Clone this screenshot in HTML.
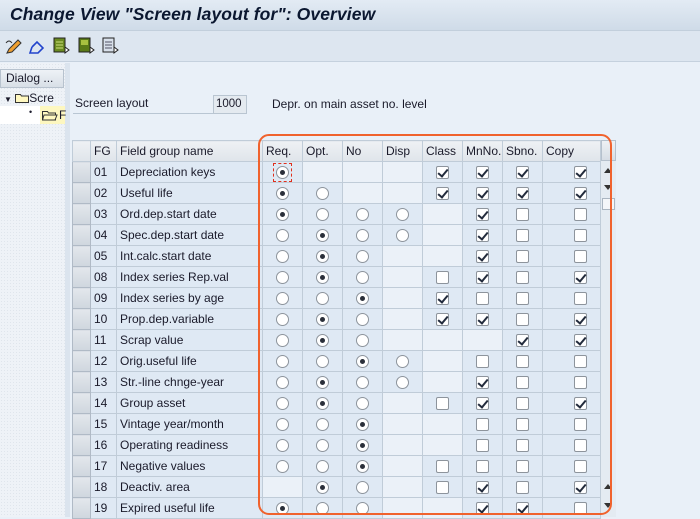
<!DOCTYPE html>
<html><head><meta charset="utf-8">
<style>
*{margin:0;padding:0;box-sizing:border-box}
body{width:700px;height:517px;overflow:hidden;background:#e9f0f8;font-family:"Liberation Sans",sans-serif;font-size:12px;color:#1a1a2a;position:relative}
.title{position:absolute;left:0;top:0;width:700px;height:31px;background:linear-gradient(#e3ebf4,#cfdbe8);border-bottom:1px solid #c2cfdc}
.title span{position:absolute;left:10px;top:4px;font-size:17.5px;font-weight:bold;font-style:italic;color:#0b1730;letter-spacing:0.1px}
.tb{position:absolute;left:0;top:31px;width:700px;height:31px;background:#dde6f0;border-bottom:1px solid #c5d1de}
.left{position:absolute;left:0;top:63px;width:65px;height:454px;background:#eef2f7;background-image:radial-gradient(#dfe5ec 0.6px,transparent 0.7px);background-size:3px 3px}
.split{position:absolute;left:65px;top:63px;width:5px;height:454px;background:#dbe4ee}
.dlg{position:absolute;left:0;top:69px;width:64px;height:19px;background:linear-gradient(#eef2f6,#d8dfe7);border:1px solid #b7c2ce;font-size:12px;padding:1px 0 0 5px}
.tr1{position:absolute;left:4px;top:91px;font-size:12px;white-space:nowrap}
.tr2{position:absolute;left:0;top:106px;width:65px;height:18px;background:#fff}
.tr2 .hl{position:absolute;left:40px;top:0;width:25px;height:18px;background:#fdf7c0}
.lbl{position:absolute;left:73px;top:96px;width:140px;height:18px;border-bottom:1px solid #b9c6d3;padding-left:2px;font-size:12px}
.fld{position:absolute;left:213px;top:95px;width:34px;height:19px;background:#e4eaf0;border:1px solid #b9c5d1;font-size:11.5px;padding:2px 0 0 2px}
.dep{position:absolute;left:272px;top:97px;font-size:12px}
table{position:absolute;left:72px;top:140px;border-collapse:collapse;table-layout:fixed;width:528px}
td{height:21px;border:1px solid #c0ccd8;background:#dfe9f4;font-size:12px;padding:0 2px;white-space:nowrap;overflow:hidden;text-align:center;vertical-align:middle}
td.e{background:#ebf1f8}
td.t{text-align:left;padding-left:3px}
td.sel{background:linear-gradient(#e3e7ec,#cfd6de);border-color:#b0bac6}
tr.h td{background:linear-gradient(#eef1f4,#dfe4ea);text-align:left;padding-left:3px}
.r{display:inline-block;width:13px;height:13px;border:1px solid #8d949c;border-radius:50%;background:#fff;vertical-align:middle;position:relative}
.r.s:after{content:"";position:absolute;left:3px;top:3px;width:5px;height:5px;border-radius:50%;background:#2a2f3a}
.c{display:inline-block;width:13px;height:13px;border:1px solid #8d949c;border-radius:2px;background:#fff;vertical-align:middle;position:relative}
.c.k:after{content:"";position:absolute;left:3px;top:0px;width:4px;height:8px;border:solid #222b3c;border-width:0 2px 2px 0;transform:rotate(40deg)}
.cp{text-align:right;padding-right:13px}
.foc{display:inline-block;border:1px dashed #e0301c;padding:2px;line-height:0;vertical-align:middle}
.sb{position:absolute;left:600px;top:140px;width:16px;height:377px;background:#e4ebf2;border-left:1px solid #c0ccd8}
.orange{position:absolute;left:258px;top:134px;width:354px;height:381px;border:2px solid #f0622d;border-radius:11px}
</style></head><body>
<div class="title"><span>Change View "Screen layout for": Overview</span></div>
<div class="tb">
<svg width="130" height="31" style="position:absolute;left:0;top:0">
<g transform="translate(5,8)"><path d="M2 14 L4 10 L13 1 L16 4 L7 13 Z" fill="#f0a030" stroke="#333" stroke-width="1"/><path d="M1 4 Q4 0 7 4" fill="none" stroke="#333"/></g>
<g transform="translate(29,8)"><path d="M3 8 L8 3 L14 9 L9 14 L4 14 M3 8 L1 14 L7 14" fill="none" stroke="#2244cc" stroke-width="1.6"/></g>
<g transform="translate(54,7)"><rect x="0" y="0" width="11" height="14" fill="#6a8a20" stroke="#222"/><path d="M2 4h7M2 7h7M2 10h7" stroke="#cde080"/><path d="M11 9 L15 12 L11 15Z" fill="#fff" stroke="#222"/></g>
<g transform="translate(79,7)"><rect x="0" y="0" width="11" height="14" fill="#5a7a18" stroke="#222"/><rect x="2" y="2" width="7" height="5" fill="#a8c040"/><path d="M11 9 L15 12 L11 15Z" fill="#fff" stroke="#222"/></g>
<g transform="translate(103,7)"><rect x="0" y="0" width="11" height="14" fill="#d8e0ea" stroke="#222"/><path d="M2 4h7M2 7h7M2 10h7" stroke="#556"/><path d="M11 9 L15 12 L11 15Z" fill="#fff" stroke="#222"/></g>
</svg></div>
<div class="left"></div><div class="split"></div>
<div class="dlg">Dialog ...</div>
<div class="tr1"><span style="font-size:8px">▼</span> <svg width="14" height="11" style="vertical-align:-1px"><path d="M0.5 2.5h5l1 1.5h7v6.5h-13z" fill="#fff8c0" stroke="#333"/></svg><span>Scre</span></div>
<div class="tr2"><div class="hl"></div><span style="position:absolute;left:29px;top:1px;font-size:9px">•</span><svg width="16" height="12" style="position:absolute;left:42px;top:3px"><path d="M0.5 2.5h5l1 1.5h7v7h-13z" fill="#fff8c0" stroke="#333"/><path d="M2 6h13l-2 5H0.5z" fill="#fff8c0" stroke="#333"/></svg><span style="position:absolute;left:59px;top:2px">F</span></div>
<div class="lbl">Screen layout</div>
<div class="fld">1000</div>
<div class="dep">Depr. on main asset no. level</div>
<table>
<colgroup><col style="width:18px"><col style="width:26px"><col style="width:146px"><col style="width:40px"><col style="width:40px"><col style="width:40px"><col style="width:40px"><col style="width:40px"><col style="width:40px"><col style="width:40px"><col style="width:58px"></colgroup>
<tr class="h"><td></td><td>FG</td><td>Field group name</td><td>Req.</td><td>Opt.</td><td>No</td><td>Disp</td><td>Class</td><td>MnNo.</td><td>Sbno.</td><td>Copy</td></tr>
<tr><td class="sel"></td><td class="t">01</td><td class="t">Depreciation keys</td><td><span class="foc"><span class="r s"></span></span></td><td class="e"></td><td class="e"></td><td class="e"></td><td><span class="c k"></span></td><td><span class="c k"></span></td><td><span class="c k"></span></td><td class="cp"><span class="c k"></span></td></tr>
<tr><td class="sel"></td><td class="t">02</td><td class="t">Useful life</td><td><span class="r s"></span></td><td><span class="r"></span></td><td class="e"></td><td class="e"></td><td><span class="c k"></span></td><td><span class="c k"></span></td><td><span class="c k"></span></td><td class="cp"><span class="c k"></span></td></tr>
<tr><td class="sel"></td><td class="t">03</td><td class="t">Ord.dep.start date</td><td><span class="r s"></span></td><td><span class="r"></span></td><td><span class="r"></span></td><td><span class="r"></span></td><td class="e"></td><td><span class="c k"></span></td><td><span class="c"></span></td><td class="cp"><span class="c"></span></td></tr>
<tr><td class="sel"></td><td class="t">04</td><td class="t">Spec.dep.start date</td><td><span class="r"></span></td><td><span class="r s"></span></td><td><span class="r"></span></td><td><span class="r"></span></td><td class="e"></td><td><span class="c k"></span></td><td><span class="c"></span></td><td class="cp"><span class="c"></span></td></tr>
<tr><td class="sel"></td><td class="t">05</td><td class="t">Int.calc.start date</td><td><span class="r"></span></td><td><span class="r s"></span></td><td><span class="r"></span></td><td class="e"></td><td class="e"></td><td><span class="c k"></span></td><td><span class="c"></span></td><td class="cp"><span class="c"></span></td></tr>
<tr><td class="sel"></td><td class="t">08</td><td class="t">Index series Rep.val</td><td><span class="r"></span></td><td><span class="r s"></span></td><td><span class="r"></span></td><td class="e"></td><td><span class="c"></span></td><td><span class="c k"></span></td><td><span class="c"></span></td><td class="cp"><span class="c k"></span></td></tr>
<tr><td class="sel"></td><td class="t">09</td><td class="t">Index series by age</td><td><span class="r"></span></td><td><span class="r"></span></td><td><span class="r s"></span></td><td class="e"></td><td><span class="c k"></span></td><td><span class="c"></span></td><td><span class="c"></span></td><td class="cp"><span class="c"></span></td></tr>
<tr><td class="sel"></td><td class="t">10</td><td class="t">Prop.dep.variable</td><td><span class="r"></span></td><td><span class="r s"></span></td><td><span class="r"></span></td><td class="e"></td><td><span class="c k"></span></td><td><span class="c k"></span></td><td><span class="c"></span></td><td class="cp"><span class="c k"></span></td></tr>
<tr><td class="sel"></td><td class="t">11</td><td class="t">Scrap value</td><td><span class="r"></span></td><td><span class="r s"></span></td><td><span class="r"></span></td><td class="e"></td><td class="e"></td><td class="e"></td><td><span class="c k"></span></td><td class="cp"><span class="c k"></span></td></tr>
<tr><td class="sel"></td><td class="t">12</td><td class="t">Orig.useful life</td><td><span class="r"></span></td><td><span class="r"></span></td><td><span class="r s"></span></td><td><span class="r"></span></td><td class="e"></td><td><span class="c"></span></td><td><span class="c"></span></td><td class="cp"><span class="c"></span></td></tr>
<tr><td class="sel"></td><td class="t">13</td><td class="t">Str.-line chnge-year</td><td><span class="r"></span></td><td><span class="r s"></span></td><td><span class="r"></span></td><td><span class="r"></span></td><td class="e"></td><td><span class="c k"></span></td><td><span class="c"></span></td><td class="cp"><span class="c"></span></td></tr>
<tr><td class="sel"></td><td class="t">14</td><td class="t">Group asset</td><td><span class="r"></span></td><td><span class="r s"></span></td><td><span class="r"></span></td><td class="e"></td><td><span class="c"></span></td><td><span class="c k"></span></td><td><span class="c"></span></td><td class="cp"><span class="c k"></span></td></tr>
<tr><td class="sel"></td><td class="t">15</td><td class="t">Vintage year/month</td><td><span class="r"></span></td><td><span class="r"></span></td><td><span class="r s"></span></td><td class="e"></td><td class="e"></td><td><span class="c"></span></td><td><span class="c"></span></td><td class="cp"><span class="c"></span></td></tr>
<tr><td class="sel"></td><td class="t">16</td><td class="t">Operating readiness</td><td><span class="r"></span></td><td><span class="r"></span></td><td><span class="r s"></span></td><td class="e"></td><td class="e"></td><td><span class="c"></span></td><td><span class="c"></span></td><td class="cp"><span class="c"></span></td></tr>
<tr><td class="sel"></td><td class="t">17</td><td class="t">Negative values</td><td><span class="r"></span></td><td><span class="r"></span></td><td><span class="r s"></span></td><td class="e"></td><td><span class="c"></span></td><td><span class="c"></span></td><td><span class="c"></span></td><td class="cp"><span class="c"></span></td></tr>
<tr><td class="sel"></td><td class="t">18</td><td class="t">Deactiv. area</td><td class="e"></td><td><span class="r s"></span></td><td><span class="r"></span></td><td class="e"></td><td><span class="c"></span></td><td><span class="c k"></span></td><td><span class="c"></span></td><td class="cp"><span class="c k"></span></td></tr>
<tr><td class="sel"></td><td class="t">19</td><td class="t">Expired useful life</td><td><span class="r s"></span></td><td><span class="r"></span></td><td><span class="r"></span></td><td class="e"></td><td class="e"></td><td><span class="c k"></span></td><td><span class="c k"></span></td><td class="cp"><span class="c"></span></td></tr>
</table>
<div class="sb">
<div style="position:absolute;left:0;top:0;width:15px;height:21px;background:linear-gradient(#eef1f4,#d6dde5);border:1px solid #b5c0cc"></div>
<div style="position:absolute;left:3px;top:28px;width:0;height:0;border:4px solid transparent;border-bottom:5px solid #333;border-top:0"></div>
<div style="position:absolute;left:3px;top:45px;width:0;height:0;border:4px solid transparent;border-top:5px solid #333;border-bottom:0"></div>
<div style="position:absolute;left:1px;top:58px;width:13px;height:12px;background:#f4f6f9;border:1px solid #aab5c1"></div>
<div style="position:absolute;left:3px;top:344px;width:0;height:0;border:4px solid transparent;border-bottom:5px solid #333;border-top:0"></div>
<div style="position:absolute;left:3px;top:363px;width:0;height:0;border:4px solid transparent;border-top:5px solid #333;border-bottom:0"></div>
</div>
<div class="orange"></div>
</body></html>
